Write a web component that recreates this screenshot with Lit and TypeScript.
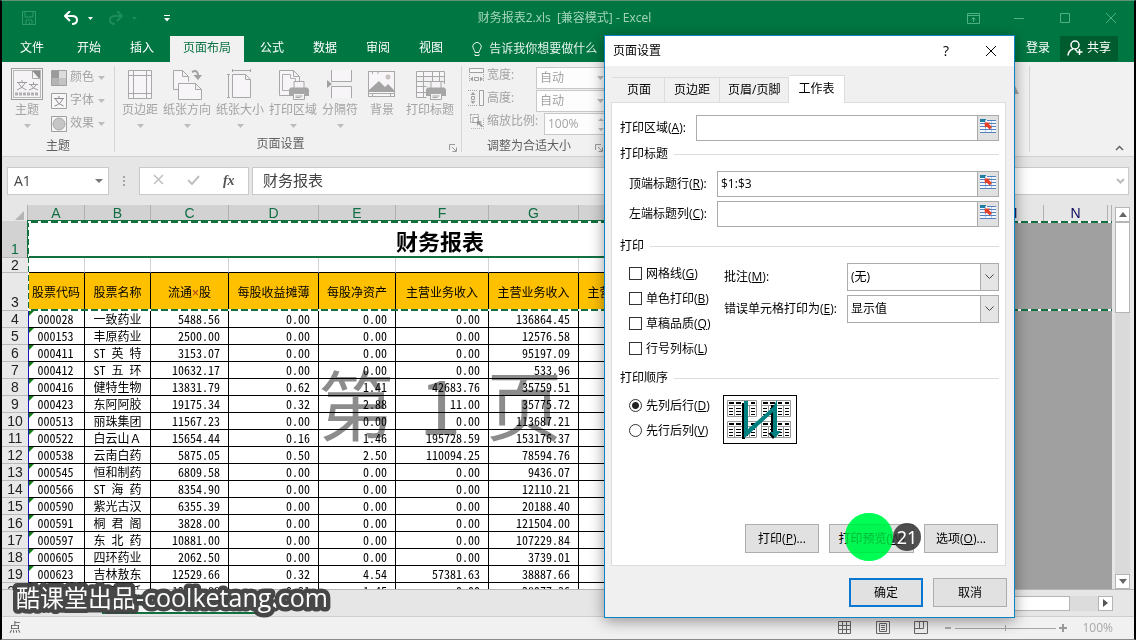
import { LitElement, html, svg, css } from "lit";
import { customElement } from "lit/decorators.js";
import { classMap } from "lit/directives/class-map.js";

const ROWS: string[][] = [
  ["000028", "一致药业", "5488.56", "0.00", "0.00", "0.00", "136864.45"],
  ["000153", "丰原药业", "2500.00", "0.00", "0.00", "0.00", "12576.58"],
  ["000411", "ST 英 特", "3153.07", "0.00", "0.00", "0.00", "95197.09"],
  ["000412", "ST 五 环", "10632.17", "0.00", "0.00", "0.00", "533.96"],
  ["000416", "健特生物", "13831.79", "0.62", "1.41", "42683.76", "35759.51"],
  ["000423", "东阿阿胶", "19175.34", "0.32", "2.88", "11.00", "35775.72"],
  ["000513", "丽珠集团", "11567.23", "0.00", "0.00", "0.00", "113687.21"],
  ["000522", "白云山Ａ", "15654.44", "0.16", "1.46", "195728.59", "153176.37"],
  ["000538", "云南白药", "5875.05", "0.50", "2.50", "110094.25", "78594.76"],
  ["000545", "恒和制药", "6809.58", "0.00", "0.00", "0.00", "9436.07"],
  ["000566", "ST 海 药", "8354.90", "0.00", "0.00", "0.00", "12110.21"],
  ["000590", "紫光古汉", "6355.39", "0.00", "0.00", "0.00", "20188.40"],
  ["000591", "桐 君 阁", "3828.00", "0.00", "0.00", "0.00", "121504.00"],
  ["000597", "东 北 药", "10881.00", "0.00", "0.00", "0.00", "107229.84"],
  ["000605", "四环药业", "2062.50", "0.00", "0.00", "0.00", "3739.01"],
  ["000623", "吉林敖东", "12529.66", "0.32", "4.54", "57381.63", "38887.66"],
  ["000650", "九江化纤", "12416.88", "0.31", "1.45", "0.00", "28977.36"],
];
const LETTERS = ["A", "B", "C", "D", "E", "F", "G", "H", "I", "J", "K", "L", "M", "N"];
const TITLES = ["股票代码", "股票名称", "", "每股收益摊薄", "每股净资产", "主营业务收入", "主营业务收入", "主营业务利润"];

const printer = (x: number, y: number) => svg`<g transform="translate(${x} ${y})">
  <path d="M5 7V.5h10V7" fill="#f6f3f6" stroke="#a6a6a6"/>
  <path d="M1.500 6.500h17l1.500 2V15h-4v-3H4v3H0V8.500z" fill="#a6a6a6"/>
  <path d="M4.500 12.500h11v6h-11zM6.500 15h7M6.500 16.500h5" fill="#f6f3f6" stroke="#a6a6a6"/></g>`;

const BIG: Record<string, unknown> = {
  theme: svg`<rect x=".5" y=".5" width="31" height="31" fill="#f6f3f6" stroke="#9c9c9c"/><rect x="2.500" y="2.500" width="27" height="27" fill="none" stroke="#b9b9b9"/><path d="M21 2.500h8v9z" fill="#8f8f8f"/><path d="M21.500 2.500v8h8" fill="none" stroke="#aaa"/><path d="M6 14.500h10M11 12v2M14 15q-2 5-8 7M7.500 15q2 5 8 7M18 16.500h9M22.500 14v2M25 17q-2 4-7 5M20 17q2 4 7 5" stroke="#9c9c9c" fill="none"/><path d="M4 26h24" stroke="#b0b0b0" stroke-width="3" stroke-dasharray="3 1"/>`,
  margins: svg`<path d="M4.500 2.500h23v28h-23zM9.500 2.500v28M22.500 2.500v28M4.500 7.500h23M4.500 25.500h23" fill="#f8f5f8" stroke="#a8a8a8"/>`,
  orient: svg`<path d="M2.500 21.500V2.500h9l6 6v5M11.500 2.500v6h6M2.500 21.500h5" fill="#f8f5f8" stroke="#a8a8a8"/><path d="M7.500 15.500h17l6 6v10h-23zM24.500 15.500v6h6" fill="#f8f5f8" stroke="#a8a8a8"/><path d="M21 4q6-3 6 4" fill="none" stroke="#a0a0a0" stroke-width="2"/><path d="M22.500 7l4.500 5 4-5z" fill="#a0a0a0"/>`,
  size: svg`<path d="M8.500 6.500h13l5 5v18h-18zM21.500 6.500v5h5" fill="#f8f5f8" stroke="#a8a8a8"/><path d="M8.500 2.500h18M8.500 1v3M26.500 1v3M4.500 6.500v23M3 6.500h3M3 29.500h3" fill="none" stroke="#a8a8a8"/>`,
  area: svg`<path d="M2.500 2.500h14l6 6v19h-20zM16.500 2.500v6h6" fill="#f8f5f8" stroke="#a8a8a8"/><path d="M5.500 6.500h8v4h5v12h-13z" fill="none" stroke="#b0b0b0"/>${printer(12, 13)}`,
  breaks: svg`<path d="M7.500 2v11.500h20V2M7.500 30V18.500h20V30" fill="#f8f5f8" stroke="#a8a8a8"/><path d="M3 12l5 4-5 4z" fill="#a0a0a0"/>`,
  bg: svg`<rect x="2.500" y="3.500" width="26" height="25" fill="#f8f5f8" stroke="#a8a8a8"/><path d="M2.500 25.500h26M6.500 3v3M12 3v3M6.500 25v3M24.500 25v3" stroke="#a8a8a8"/><circle cx="22" cy="9" r="2.500" fill="#c9c2c0"/><path d="M3 22l10-9 6 6 3-3 6 6v2H3z" fill="#a3a3a3"/>`,
  titles: svg`<path d="M2.500 3.500h28v5h-28zM2.500 8.500v21h10M9.500 3.500v26M18.500 3.500v12M25.500 3.500v12M30.500 8v8M2.500 13.500h28M2.500 18.500h10M2.500 24.500h10" fill="#f8f5f8" stroke="#a8a8a8"/>${printer(12, 13)}`,
};

const SMALL: Record<string, unknown> = {
  color: svg`<path d="M.5.5h15v15H.5z" fill="#c4c4c4" stroke="#a0a0a0"/><path d="M1 1h7v7H1z" fill="#9a9a9a"/><path d="M8 1h7v7H8z" fill="#ddd"/><path d="M1 8h7v7H1z" fill="#b4b4b4"/>`,
  font: svg`<path d="M.5.5h15v15H.5z" fill="#f7f5f7" stroke="#a0a0a0"/><path d="M3 5.500h10M8 3v2M11.500 6q-1.500 5-8 7M4.500 6q2 5 8 7" fill="none" stroke="#8c8c8c"/>`,
  effect: svg`<path d="M.5.5h15v15H.5z" fill="#f7f5f7" stroke="#a0a0a0"/><circle cx="8" cy="8" r="6" fill="#c6c6c6" stroke="#aaa"/>`,
  width: svg`<path d="M1.500 1.500h14v4h-14z" fill="#f7f5f7" stroke="#a0a0a0"/><path d="M1.500 7v8M15.500 7v8" stroke="#a0a0a0" stroke-dasharray="1 1"/><path d="M6.500 10.500h4v3h-4z" fill="none" stroke="#a0a0a0"/><path d="M5 9.500v5L2 12zM12 9.500v5l3-2.500z" fill="#a0a0a0"/>`,
  height: svg`<path d="M11.500.5h4v15h-4z" fill="#f7f5f7" stroke="#a0a0a0"/><path d="M0 .5h10M0 15.500h10" stroke="#a0a0a0" stroke-dasharray="1 1"/><path d="M3.500 6.500h3v3h-3z" fill="none" stroke="#a0a0a0"/><path d="M2.500 5h5L5 2zM2.500 11h5L5 14z" fill="#a0a0a0"/>`,
  scale: svg`<path d="M2.500 1.500h8v8h-8z" fill="none" stroke="#a0a0a0" stroke-dasharray="2 1"/><path d="M5 4.500h5v5H5z" fill="#f7f5f7" stroke="#a0a0a0"/><path d="M3 15.500h12.500V4" fill="none" stroke="#b4b4b4" stroke-dasharray="1 1"/><path d="M9 8l5 .5-1.700 1.500 2.700 3-1.500 1.200-2.600-3-1.900 1.600z" fill="#999"/>`,
};

const chev = html`<svg class="down" width="7" height="4" viewBox="0 0 7 4"><path d="M0 0h7L3.500 4z" fill="currentColor"/></svg>`;
const launcher = html`<svg class="launcher" width="8" height="8" viewBox="0 0 8 8"><path d="M.5 6V.5H6M3 3l4 4M7.500 3.500v4h-4" fill="none" stroke="#999"/></svg>`;
const refIcon = html`<svg width="16" height="14" viewBox="0 0 16 14">
  <path d="M0 1h16v13H0z" fill="#f4f8fd"/><path d="M0 0h6v3H0z" fill="#1f7fa6"/>
  <path d="M5.500 1v12M11.500 1v12" stroke="#b4cbe8" fill="none"/>
  <path d="M7 1.500h9M0 4.500h16M0 7.500h16M0 10.500h16M0 13.500h16" stroke="#5580c0" fill="none"/>
  <path d="M4.500 3.500h5.500L8.700 5l3.300 3-2.300 2.500-3.200-3.200L5 9z" fill="#e63f25"/></svg>`;

@customElement("excel-title-bar")
export class ExcelTitleBar extends LitElement {
  static styles = css`
    :host { display: block; background: #007743; color: #fff; font: 12px/16px "Open Sans", "Noto Sans CJK SC", sans-serif; }
    button { border: 0; padding: 0; background: none; color: inherit; font: inherit; display: flex; align-items: center; justify-content: center; }
    .bar { display: flex; align-items: center; height: 34px; position: relative; }
    .quick { display: flex; align-items: center; padding-left: 19px; }
    .save { width: 16px; color: #2f9a6b; }
    .undo { width: 30px; gap: 9px; margin-left: 26px; }
    .redo { width: 30px; gap: 9px; margin-left: 14px; color: #1d8c5a; }
    .more { width: 9px; margin-left: 25px; }
    .name { flex: 1; text-align: center; color: #a5d6bd; white-space: pre; }
    .window { display: flex; gap: 16px; color: #4fb184; padding-right: 8px; }
    .window button { width: 30px; height: 30px; }
    .tabs { display: flex; height: 27px; gap: 3px; align-items: center; }
    .tab { height: 26px; padding: 0 13px 2px; align-self: flex-end; }
    .file { padding: 0 17px 2px 18px; }
    .on { background: #f1f1f1; color: #0c7444; }
    .tell { gap: 7px; margin-left: 13px; color: #e2f2ea; }
    .login { margin-left: auto; margin-right: 7px; padding-bottom: 1px; }
    .share { background: #005c2e; height: 25px; padding: 0 7px 2px; gap: 4px; margin-right: 16px; }
  `;
  render() {
    return html`
      <div class="bar">
        <div class="quick">
          <button class="save" aria-label="保存"><svg width="14" height="14" viewBox="0 0 14 14"><path d="M.5.5h13v13H.5zM3 1v5h8V1M4 13.500V9h6v4.500M7.500 11v2" fill="none" stroke="currentColor"/></svg></button>
          <button class="undo" aria-label="撤消"><svg width="15" height="14" viewBox="0 0 15 14"><path d="M2 5h6q5 0 5 4t-5 4" fill="none" stroke="currentColor" stroke-width="2"/><path d="M6 0L1 5l5 5" fill="none" stroke="currentColor" stroke-width="2"/></svg><svg width="5" height="3" viewBox="0 0 5 3"><path d="M0 0h5L2.500 3z" fill="currentColor"/></svg></button>
          <button class="redo" aria-label="恢复"><svg width="15" height="14" viewBox="0 0 15 14"><path d="M13 5H7Q2 5 2 9t5 4" fill="none" stroke="currentColor" stroke-width="2"/><path d="M9 0l5 5-5 5" fill="none" stroke="currentColor" stroke-width="2"/></svg><svg width="5" height="3" viewBox="0 0 5 3"><path d="M0 0h5L2.500 3z" fill="currentColor"/></svg></button>
          <button class="more" aria-label="自定义"><svg width="6" height="7" viewBox="0 0 6 7"><path d="M0 .5h6" stroke="currentColor"/><path d="M0 3h6L3 6.500z" fill="currentColor"/></svg></button>
        </div>
        <div class="name">财务报表2.xls  [兼容模式] - Excel</div>
        <div class="window">
          <button aria-label="功能区显示选项"><svg width="13" height="11" viewBox="0 0 13 11"><path d="M.5.5h12v10H.5zM.5 2.500h12M6.500 9V5M4.500 6.500l2-2 2 2" fill="none" stroke="currentColor"/></svg></button>
          <button aria-label="最小化"><svg width="10" height="10" viewBox="0 0 10 10"><path d="M0 5.500h10" stroke="currentColor"/></svg></button>
          <button aria-label="最大化"><svg width="10" height="10" viewBox="0 0 10 10"><path d="M.5.5h9v9h-9z" fill="none" stroke="currentColor"/></svg></button>
          <button aria-label="关闭"><svg width="10" height="10" viewBox="0 0 10 10"><path d="M0 0l10 10M10 0L0 10" stroke="currentColor"/></svg></button>
        </div>
      </div>
      <nav class="tabs">
        <button class="tab file">文件</button><button class="tab">开始</button><button class="tab">插入</button>
        <button class="tab on">页面布局</button><button class="tab">公式</button><button class="tab">数据</button>
        <button class="tab">审阅</button><button class="tab">视图</button>
        <button class="tell"><svg width="10" height="14" viewBox="0 0 10 14"><path d="M3 10.500Q3 8.500 1.500 7a4.200 4.200 0 1 1 7 0Q7 8.500 7 10.500zM3 12v1.500h4V12" fill="none" stroke="currentColor"/></svg>告诉我你想要做什么</button>
        <button class="login">登录</button>
        <button class="share"><svg width="16" height="16" viewBox="0 0 16 16"><circle cx="8" cy="5" r="4" fill="none" stroke="currentColor" stroke-width="1.500"/><path d="M1 15.500q.5-5 5-6.500M8 9.500l2 1.500M12.500 9v6M9.500 12h6" fill="none" stroke="currentColor" stroke-width="1.500"/></svg>共享</button>
      </nav>`;
  }
}

@customElement("excel-ribbon")
export class ExcelRibbon extends LitElement {
  static styles = css`
    :host { display: flex; background: #f1f1f1; border-bottom: 1px solid #d0d0d0; height: 94px; color: #a3a3a3; font: 12px/16px "Open Sans", "Noto Sans CJK SC", sans-serif; }
    button { border: 0; padding: 0; background: none; color: inherit; font: inherit; white-space: nowrap; }
    .group { position: relative; display: flex; flex-direction: column; margin: 4px 0; border-right: 1px solid #d5d5d5; }
    .body { display: flex; gap: 1px; height: 69px; }
    .caption { text-align: center; color: #5e5e5e; margin-top: 3px; }
    .themes { width: 112px; }
    .themes .body { padding-left: 7px; gap: 6px; }
    .page { width: 346px; }
    .page .body { padding-left: 5px; }
    .page .caption { padding-right: 15px; }
    .big { display: flex; flex-direction: column; align-items: center; min-width: 40px; padding: 2px 2px 0; }
    .big span { margin-top: 2px; }
    .big .down { margin-top: 6px; }
    .big.plain { margin-left: 1px; }
    .themes .big { padding: 2px 0 0; min-width: 36px; }
    .rows { display: flex; flex-direction: column; }
    .row { display: flex; align-items: center; height: 23px; gap: 3px; }
    .themes .row { padding-bottom: 2px; }
    .themes .row svg { margin-top: 2px; }
    .row .down { margin-left: 1px; }
    .down { color: #bcbcbc; flex: none; }
    .fit { width: 145px; }
    .fit .body { padding-left: 6px; }
    .fit .rows { flex: 1; }
    .fit .row { align-items: flex-start; padding-top: 1px; box-sizing: border-box; }
    .fit .caption { padding-right: 11px; }
    .pick { position: relative; margin-left: auto; display: flex; align-items: center; }
    .pick .down { position: absolute; right: 3px; }
    select, input { box-sizing: border-box; width: 71px; height: 22px; border: 1px solid #c8c8c8; background: #fdfdfd; color: #a3a3a3; font: inherit; padding: 0 3px 1px; appearance: none; border-radius: 0; opacity: 1; }
    .pct { width: 63px; }
    .launcher { position: absolute; right: 4px; bottom: 0; }
    .hidden { flex: none; width: 421px; align-items: flex-end; }
    .tri { margin-top: 20px; padding-right: 10px; }
    .fold { margin: auto 10px 5px auto; display: flex; }
  `;
  private big(icon: string, text: string, arrow = true) {
    return html`<button class=${classMap({ big: true, plain: !arrow })}><svg width="32" height="32" viewBox="0 0 32 32">${BIG[icon]}</svg><span>${text}</span>${arrow ? chev : ""}</button>`;
  }
  private icon(name: string) {
    return html`<svg width="16" height="16" viewBox="0 0 16 16">${SMALL[name]}</svg>`;
  }
  render() {
    return html`
      <section class="group themes">
        <div class="body">${this.big("theme", "主题")}
          <div class="rows">
            <button class="row">${this.icon("color")}颜色${chev}</button>
            <button class="row">${this.icon("font")}字体${chev}</button>
            <button class="row">${this.icon("effect")}效果${chev}</button>
          </div>
        </div>
        <div class="caption">主题</div>
      </section>
      <section class="group page">
        <div class="body">
          ${this.big("margins", "页边距")}${this.big("orient", "纸张方向")}${this.big("size", "纸张大小")}
          ${this.big("area", "打印区域")}${this.big("breaks", "分隔符")}${this.big("bg", "背景", false)}${this.big("titles", "打印标题", false)}
        </div>
        <div class="caption">页面设置</div>${launcher}
      </section>
      <section class="group fit">
        <div class="body"><div class="rows">
          <label class="row">${this.icon("width")}宽度:<span class="pick"><select disabled><option>自动</option></select>${chev}</span></label>
          <label class="row">${this.icon("height")}高度:<span class="pick"><select disabled><option>自动</option></select>${chev}</span></label>
          <label class="row">${this.icon("scale")}缩放比例:<span class="pick"><input class="pct" disabled value="100%" /><svg class="down" width="6" height="13" viewBox="0 0 6 13"><path d="M0 3h6L3 0zM0 10h6l-3 3z" fill="currentColor"/></svg></span></label>
        </div></div>
        <div class="caption">调整为合适大小</div>${launcher}
      </section>
      <section class="group hidden"><svg class="tri" width="8" height="8" viewBox="0 0 8 8"><path d="M4 0l4 8H0z" fill="#aaa"/></svg></section>
      <button class="fold" aria-label="折叠功能区"><svg width="9" height="6" viewBox="0 0 9 6"><path d="M1 5l3.500-3.500L8 5" fill="none" stroke="#666" stroke-width="1.500"/></svg></button>`;
  }
}

@customElement("formula-bar")
export class FormulaBar extends LitElement {
  static styles = css`
    :host { display: flex; align-items: center; height: 48px; box-sizing: border-box; padding: 0 5px; background: #e6e6e6; }
    input, .name, .tools { box-sizing: border-box; height: 28px; background: #fff; border: 1px solid #c9c9c9; }
    input { font: 15px/20px "Open Sans", "Noto Sans CJK SC", sans-serif; color: #444; margin: 0; min-width: 0; }
    .name { width: 102px; display: flex; align-items: center; padding-right: 5px; }
    .name input { border: 0; flex: 1; width: 50px; height: 24px; font-size: 14px; padding: 0 6px 2px; }
    .dots { width: 30px; display: flex; justify-content: center; }
    .tools { width: 110px; display: flex; align-items: center; justify-content: space-around; padding: 0 2px; }
    .tools button { border: 0; background: none; padding: 0; color: #555; font: italic bold 14px/20px "Liberation Serif", serif; }
    .formula { flex: 1; margin-left: 3px; display: flex; position: relative; align-items: center; }
    .formula input { flex: 1; padding: 0 10px 3px; }
    .formula svg { position: absolute; right: 4px; }
  `;
  render() {
    return html`
      <div class="name"><input aria-label="名称框" value="A1" /><svg width="8" height="4" viewBox="0 0 8 4"><path d="M0 0h8L4 4z" fill="#777"/></svg></div>
      <div class="dots"><svg width="2" height="10" viewBox="0 0 2 10"><path d="M0 0h2v2H0zM0 4h2v2H0zM0 8h2v2H0z" fill="#a5a5a5"/></svg></div>
      <div class="tools">
        <button aria-label="取消"><svg width="11" height="11" viewBox="0 0 11 11"><path d="M1 1l9 9M10 1l-9 9" stroke="#c0c0c0" stroke-width="1.500"/></svg></button>
        <button aria-label="输入"><svg width="13" height="10" viewBox="0 0 13 10"><path d="M1 5l4 4 7-8" fill="none" stroke="#c0c0c0" stroke-width="2"/></svg></button>
        <button>fx</button>
      </div>
      <div class="formula"><input aria-label="编辑栏" value="财务报表" /><svg width="9" height="6" viewBox="0 0 9 6"><path d="M1 1l3.500 3.500L8 1" fill="none" stroke="#bbb" stroke-width="2"/></svg></div>`;
  }
}

@customElement("sheet-grid")
export class SheetGrid extends LitElement {
  static styles = css`
    :host { display: flex; flex: 1; min-height: 0; background: #e6e6e6; }
    .sheet { position: relative; flex: 1; overflow: hidden; background: #a0a0a0; }
    table { border-collapse: separate; border-spacing: 0; table-layout: fixed; width: 100%; font: 12px/16px "Noto Sans Mono CJK SC", "Noto Sans CJK SC", sans-serif; color: #000; }
    th, td { box-sizing: border-box; padding: 0; overflow: hidden; white-space: pre; font-weight: 400; }
    .h { width: 26px; } .a { width: 57px; } .b { width: 66px; } .c { width: 78px; } .d { width: 90px; } .e { width: 77px; }
    .f { width: 93px; } .i { width: 91px; } .j { width: 92px; } .n { width: 64px; }
    .top { height: 16px; background: #e6e6e6; border-right: 1px solid #b0b0b0; color: #0d0d5c; font: 14px/16px "Liberation Sans", sans-serif; }
    .sel { background: #d2d2d2; color: #0f6e43; }
    .corner svg { display: block; margin: 5px 2px 0 auto; }
    .num { background: #e8e8e8; border-bottom: 1px solid #b9b9b9; vertical-align: bottom; color: #222; font: 14px/16px "Liberation Sans", sans-serif; }
    .num.sel { background: #d2d2d2; color: #0f6e43; }
    .r1 { height: 37px; } .r2 { height: 15px; } .r3 { height: 38px; } .r { height: 17px; }
    .r2 .num { line-height: 14px; }
    .headline { background: #fff; text-align: center; font: bold 22px/30px "Noto Sans CJK SC", sans-serif; }
    .r2 td { background: #fff; border-right: 1px solid #d4d4d4; border-bottom: 1px solid #000; line-height: 14px; }
    .r3 td { background: #ffc000; border-right: 1px solid #000; text-align: center; }
    .r td { position: relative; background: #fff; border-right: 1px solid #000; border-bottom: 1px solid #000; text-align: right; padding-right: 8px; }
    .r .mid { text-align: center; padding: 0; }
    .r .code { border-left: 1px solid #1a1ab8; padding: 0 2px 0 0; }
    .code::before { content: ""; position: absolute; left: 0; top: 0; border-top: 5px solid #107c10; border-right: 5px solid transparent; }
    tr .out { background: #a0a0a0; border: 0; }
    .x { color: #a8321a; font-family: "Liberation Sans", sans-serif; }
    .ants { position: absolute; left: 26px; right: 0; height: 2px; background: repeating-linear-gradient(90deg, #fff 0 3px, #12703f 3px 10px); }
    .first { top: 16px; }
    .last { top: 104px; }
    .box { position: absolute; left: 25px; top: 15px; width: 824px; height: 38px; box-sizing: border-box; border: 2px solid #12703f; }
    .side { position: absolute; left: 26px; top: 18px; width: 1px; height: 88px; background: repeating-linear-gradient(0deg, #fff 0 3px, #12703f 3px 9px); }
    .pageno { position: absolute; left: 316px; top: 152px; display: flex; gap: 25px; font: 76px/90px "Noto Sans CJK SC", sans-serif; color: #8c8c8c; mix-blend-mode: multiply; }
    .scroll { width: 15px; margin: 2px 4px 0 3px; display: flex; flex-direction: column; background: #dadada; }
    .scroll button { box-sizing: border-box; width: 15px; height: 15px; padding: 0; border: 1px solid #b5b5b5; background: #fff; display: flex; align-items: center; justify-content: center; }
    .thumb { height: 89px; background: #fff; border: 1px solid #b5b5b5; margin-bottom: auto; }
  `;
  render() {
    const cols = ["h", "a", "b", "c", "d", "e", "f", "d", "d", "i", "j", "n", "n", "n", "n", ""];
    const out = html`<td class="out" colspan="5"></td>`;
    return html`
      <div class="sheet">
        <table>
          <colgroup>${cols.map((c) => html`<col class=${c} />`)}</colgroup>
          <thead><tr>
            <th class="top corner"><svg width="10" height="9" viewBox="0 0 10 9"><path d="M9 0v9H0z" fill="#b5b5b5"/></svg></th>
            ${LETTERS.map((l, i) => html`<th class=${classMap({ top: true, sel: i < 10 })}>${l}</th>`)}
            <th class="top"></th>
          </tr></thead>
          <tbody>
            <tr class="r1"><th class="num sel">1</th><td class="headline" colspan="10">财务报表</td>${out}</tr>
            <tr class="r2"><th class="num">2</th>${LETTERS.slice(0, 10).map(() => html`<td></td>`)}${out}</tr>
            <tr class="r3"><th class="num">3</th>
              ${LETTERS.slice(0, 10).map((_, i) => html`<td>${i === 2 ? html`流通<span class="x">×</span>股` : TITLES[i] ?? ""}</td>`)}${out}</tr>
            ${ROWS.map((row, r) => html`<tr class="r"><th class="num">${r + 4}</th>
              ${LETTERS.slice(0, 10).map((_, i) => html`<td class=${classMap({ mid: i < 2, code: i === 0 })}>${row[i] ?? ""}</td>`)}${out}</tr>`)}
          </tbody>
        </table>
        <div class="pageno"><span>第</span><span>1</span><span>页</span></div>
        <div class="box"></div><div class="ants first"></div><div class="ants last"></div><div class="side"></div>
      </div>
      <div class="scroll">
        <button aria-label="向上"><svg width="8" height="5" viewBox="0 0 8 5"><path d="M0 5h8L4 0z" fill="#666"/></svg></button>
        <div class="thumb"></div>
        <button aria-label="向下"><svg width="8" height="5" viewBox="0 0 8 5"><path d="M0 0h8L4 5z" fill="#666"/></svg></button>
      </div>`;
  }
}

@customElement("sheet-footer")
export class SheetFooter extends LitElement {
  static styles = css`
    :host { display: block; font: 12px/16px "Open Sans", "Noto Sans CJK SC", sans-serif; color: #555; }
    button { border: 0; padding: 0; background: none; font: inherit; display: flex; }
    .tabs { display: flex; align-items: center; height: 28px; box-sizing: border-box; background: #e6e6e6; border-top: 1px solid #b5b5b5; border-bottom: 1px solid #cfcfcf; padding: 0 21px 0 100px; }
    .sheet { height: 24px; align-items: center; justify-content: center; width: 156px; background: #f6f6f6; border-bottom: 2px solid #12703f; color: #12703f; align-self: flex-start; }
    .scroll { margin-left: auto; width: 480px; height: 15px; background: #dcdcdc; display: flex; }
    .thumb { box-sizing: border-box; width: 437px; background: #fff; border: 1px solid #b5b5b5; }
    .right { box-sizing: border-box; width: 15px; height: 15px; margin-left: auto; border: 1px solid #b5b5b5; background: #fff; align-items: center; justify-content: center; }
    .status { display: flex; align-items: center; height: 22px; background: #f1f1f1; padding: 0 21px 1px 7px; box-sizing: border-box; }
    .views { display: flex; gap: 24px; margin-left: auto; padding-right: 16px; }
    .zoom { display: flex; align-items: center; gap: 3px; }
    .pct { margin-left: 15px; color: #a8a8a8; }
  `;
  render() {
    return html`
      <div class="tabs"><button class="sheet">××类上市公司财务指标</button>
        <div class="scroll"><div class="thumb"></div><button class="right" aria-label="向右"><svg width="5" height="8" viewBox="0 0 5 8"><path d="M0 0v8l5-4z" fill="#555"/></svg></button></div></div>
      <div class="status"><span>点</span>
        <div class="views">
          <button aria-label="普通"><svg width="14" height="13" viewBox="0 0 14 13"><path d="M.5.5h12v12H.5zM4.500.5v12M8.500.5v12M.5 4.500h12M.5 8.500h12" fill="none" stroke="#666"/></svg></button>
          <button aria-label="页面布局"><svg width="14" height="13" viewBox="0 0 14 13"><path d="M.5.5h13v12H.5zM3.500 2.500h7v8h-7zM5 4.500h4M5 6.500h4M5 8.500h4" fill="none" stroke="#666"/></svg></button>
          <button aria-label="分页预览"><svg width="14" height="13" viewBox="0 0 14 13"><path d="M.5.5h13v12H.5zM5.500.5v7M9.500.5v7M.5 7.500h9" fill="none" stroke="#666"/></svg></button>
        </div>
        <div class="zoom">
          <svg width="8" height="8" viewBox="0 0 8 8"><path d="M1 4h6" stroke="#aaa" stroke-width="2"/></svg>
          <svg width="101" height="8" viewBox="0 0 101 8"><path d="M0 4.500h101M50.500 1v6" stroke="#a5a5a5"/></svg>
          <svg width="8" height="8" viewBox="0 0 8 8"><path d="M0 4h8M4 0v8" stroke="#999" stroke-width="2"/></svg>
        </div>
        <span class="pct">100%</span>
      </div>`;
  }
}

const miniTable = (x: number, y: number) => svg`<g transform="translate(${x} ${y})">
  <path d="M.5.5h29v16H.5zM.5 5.500h29M7.500 5v11M15.500 5v11M22.500 5v11" fill="#fff" stroke="#999"/>
  <path d="M2 3h5M9 3h5M17 3h4M24 3h4" stroke="#000" stroke-width="2"/>
  <path d="M2 8.500h4M2 11.500h4M2 14.500h4M9 8.500h5M9 11.500h5M9 14.500h5M17 8.500h4M17 11.500h4M17 14.500h4M24 8.500h4M24 11.500h4M24 14.500h4" stroke="#000"/></g>`;

@customElement("page-setup-dialog")
export class PageSetupDialog extends LitElement {
  static styles = css`
    :host { display: block; box-sizing: border-box; border: 1px solid #0a84c4; background: #f0f0f0; color: #000; font: 12px/16px "Open Sans", "Noto Sans CJK SC", sans-serif; box-shadow: 0 3px 14px rgba(0, 0, 0, 0.4); padding-bottom: 10px; }
    button { font: inherit; color: inherit; box-sizing: border-box; padding: 0; }
    .title { display: flex; align-items: center; height: 30px; background: #fff; padding: 0 17px 0 8px; }
    .title button { border: 0; background: none; font-size: 14px; display: flex; }
    .help { margin-left: auto; margin-right: 36px; }
    .tabs { display: flex; align-items: flex-end; padding: 9px 0 0 7px; }
    .tab { height: 25px; border: 1px solid #dcdcdc; border-width: 1px 1px 0 0; background: #f0f0f0; padding: 0 9px; }
    .wide { padding: 0 13px 0 15px; }
    .on { height: 28px; padding: 0 10px 1px 9px; background: #fff; border-width: 1px 1px 0 0; margin-bottom: -1px; }
    .before { padding: 0 8px; }
    .panel { display: flex; flex-direction: column; min-height: 464px; box-sizing: border-box; margin: 0 8px 0 6px; border: 1px solid #dcdcdc; background: #fff; padding: 12px 6px 12px 8px; }
    .ref { display: flex; align-items: center; height: 26px; }
    .inner { padding-left: 9px; margin-top: 4px; }
    .inner.lead { margin-top: 9px; }
    .ref label { width: 76px; white-space: nowrap; }
    .inner label { width: 88px; }
    .ref input { flex: 1; min-width: 0; box-sizing: border-box; height: 26px; border: 1px solid #ababab; border-right: 0; font: inherit; padding: 0 3px 1px; margin: 0; }
    .ref button { width: 22px; height: 26px; border: 1px solid #ababab; background: #e1e1e1; display: flex; justify-content: center; padding-top: 3px; }
    .section { display: flex; align-items: center; gap: 6px; height: 16px; margin-top: 5px; }
    .section::after { content: ""; flex: 1; height: 1px; background: #dcdcdc; }
    .print { margin-top: 11px; }
    .order { margin-top: 9px; }
    .cols { display: flex; padding-left: 9px; margin-top: 7px; }
    .checks { width: 94px; }
    .check { display: flex; align-items: center; gap: 4px; height: 25px; white-space: nowrap; }
    .check input { appearance: none; box-sizing: border-box; width: 13px; height: 13px; margin: 0; border: 1px solid #333; background: #fff; }
    .check input[type="radio"] { border-radius: 50%; }
    .check input[type="radio"]:checked { background: radial-gradient(circle, #222 0 3px, #fff 4px); }
    .selects { flex: 1; display: flex; flex-direction: column; gap: 4px; padding-top: 2px; }
    .line { display: flex; align-items: center; justify-content: space-between; padding-left: 1px; }
    .combo { position: relative; width: 152px; display: flex; }
    select { appearance: none; box-sizing: border-box; flex: 1; height: 28px; border: 1px solid #ababab; border-radius: 0; background: #fff; color: #000; font: inherit; padding: 0 3px; margin: 0; }
    .drop { position: absolute; right: 1px; top: 1px; bottom: 1px; width: 17px; border-left: 1px solid #ababab; background: #e5e5e5; display: flex; align-items: center; justify-content: center; pointer-events: none; }
    .pic { margin-top: 2px; }
    .actions { display: flex; justify-content: flex-end; gap: 10px; margin-top: auto; padding-right: 1px; }
    .push { width: 74px; height: 29px; border: 1px solid #adadad; background: #e1e1e1; white-space: nowrap; }
    .preview { width: 85px; position: relative; }
    .halo { position: absolute; left: 15px; top: -12px; width: 48px; height: 48px; border-radius: 50%; background: rgba(0, 255, 104, 0.55); }
    .halo::before { content: ""; position: absolute; inset: 0; border-radius: 50%; background: #00ff69; mix-blend-mode: multiply; }
    .halo::after { content: ""; position: absolute; inset: 0; border-radius: 50%; background: #00ff69; opacity: 0.4; }
    .badge { position: absolute; left: 63px; top: -2px; width: 28px; height: 28px; border-radius: 50%; background: rgba(50, 50, 50, 0.85); color: #fff; font: 18px/28px "Noto Sans", sans-serif; text-align: center; }
    .foot { display: flex; justify-content: flex-end; gap: 10px; padding: 12px 7px 0; }
    .ok { border: 2px solid #0a78d0; }
  `;
  private ref(id: string, text: string, key: string, value: string, cls: string) {
    return html`<div class="ref ${cls}"><label for=${id}>${text}(<u>${key}</u>):</label><input id=${id} .value=${value} /><button aria-label="折叠对话框">${refIcon}</button></div>`;
  }
  private tick(type: string, text: string, key: string, on = false) {
    return html`<label class="check"><input type=${type} name=${type} ?checked=${on} /><span>${text}(<u>${key}</u>)</span></label>`;
  }
  private combo(id: string, text: string, key: string, value: string) {
    return html`<div class="line"><label for=${id}>${text}(<u>${key}</u>):</label>
      <span class="combo"><select id=${id}><option>${value}</option></select><span class="drop"><svg width="9" height="6" viewBox="0 0 9 6"><path d="M.5.5l4 4 4-4" fill="none" stroke="#444"/></svg></span></span></div>`;
  }
  render() {
    return html`
      <div class="title"><span>页面设置</span><button class="help">?</button>
        <button aria-label="关闭"><svg width="12" height="12" viewBox="0 0 12 12"><path d="M1 1l10 10M11 1L1 11" stroke="#000"/></svg></button></div>
      <div class="tabs"><button class="tab wide">页面</button><button class="tab">页边距</button><button class="tab before">页眉/页脚</button><button class="tab on">工作表</button></div>
      <div class="panel">
        ${this.ref("area", "打印区域", "A", "", "")}
        <div class="section">打印标题</div>
        ${this.ref("rows", "顶端标题行", "R", "$1:$3", "inner lead")}
        ${this.ref("cols", "左端标题列", "C", "", "inner")}
        <div class="section print">打印</div>
        <div class="cols">
          <div class="checks">${this.tick("checkbox", "网格线", "G")}${this.tick("checkbox", "单色打印", "B")}${this.tick("checkbox", "草稿品质", "Q")}${this.tick("checkbox", "行号列标", "L")}</div>
          <div class="selects">${this.combo("notes", "批注", "M", "(无)")}${this.combo("errors", "错误单元格打印为", "E", "显示值")}</div>
        </div>
        <div class="section order">打印顺序</div>
        <div class="cols">
          <div class="checks">${this.tick("radio", "先列后行", "D", true)}${this.tick("radio", "先行后列", "V")}</div>
          <svg class="pic" width="74" height="49" viewBox="0 0 74 49"><rect x=".5" y=".5" width="73" height="48" fill="#fff" stroke="#000"/>
            ${miniTable(4, 5)}${miniTable(38, 5)}${miniTable(4, 26)}${miniTable(38, 26)}
            <path d="M19 8h3v36h-3zM48 10h3v28h4l-5 6-5-6h3z" fill="#000"/>
            <path d="M21 6h4v28L50 12l4-7v31h4l-6 7-5-6h3V17L24 41l-3 2z" fill="#008080"/></svg>
        </div>
        <div class="actions">
          <button class="push">打印(<u>P</u>)...</button>
          <button class="push preview">打印预览(<u>W</u>)<span class="halo"></span><span class="badge">21</span></button>
          <button class="push">选项(<u>O</u>)...</button>
        </div>
      </div>
      <div class="foot"><button class="push ok">确定</button><button class="push">取消</button></div>`;
  }
}

@customElement("app-root")
export class AppRoot extends LitElement {
  static styles = css`
    :host { display: block; }
    .app { position: relative; display: flex; flex-direction: column; height: 100vh; box-sizing: border-box; overflow: hidden; background: #e6e6e6; border: solid #000; border-width: 1px 2px; border-top-color: #5f9279; border-bottom-color: #8a8a8a; }
    .dialog { position: absolute; left: 602px; top: 34px; width: 411px; }
    .credit { position: absolute; left: 8px; bottom: 18px; width: 340px; height: 44px; opacity: 0.95; }
    .credit text { font: 24px "Open Sans", "Noto Sans CJK SC", sans-serif; fill: #fff; stroke: #3f3f3f; stroke-width: 9px; stroke-linejoin: round; paint-order: stroke; }
    .credit .site { font-size: 25px; }
  `;
  render() {
    return html`<div class="app">
      <excel-title-bar></excel-title-bar>
      <excel-ribbon></excel-ribbon>
      <formula-bar></formula-bar>
      <sheet-grid></sheet-grid>
      <sheet-footer></sheet-footer>
      <page-setup-dialog class="dialog"></page-setup-dialog>
      <svg class="credit" viewBox="0 0 340 44"><text x="6" y="30">酷课堂出品<tspan class="site">-coolketang.com</tspan></text></svg>
    </div>`;
  }
}
